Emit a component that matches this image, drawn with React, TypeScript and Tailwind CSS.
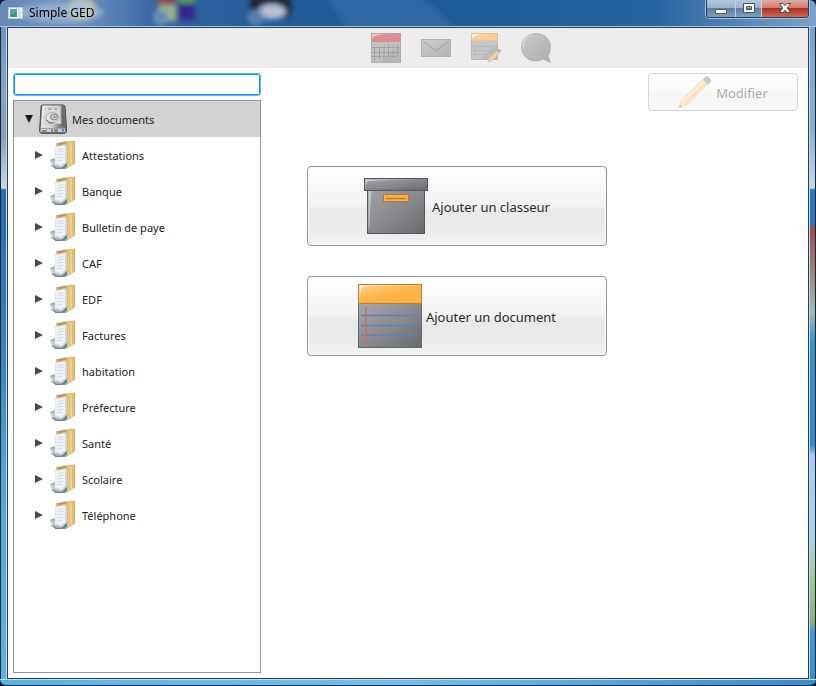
import { useId, useState, type ReactNode } from "react";

const folders = [
  "Attestations",
  "Banque",
  "Bulletin de paye",
  "CAF",
  "EDF",
  "Factures",
  "habitation",
  "Préfecture",
  "Santé",
  "Scolaire",
  "Téléphone",
];

function AppIcon() {
  return (
    <svg width="16" height="14" viewBox="0 0 16 14" aria-hidden="true">
      <rect x="0.5" y="1.5" width="14" height="11" fill="#f4f7f8" stroke="#c3ccd2" />
      <rect x="2" y="3" width="7" height="8" fill="#3f9180" />
      <path d="M2 3h7v3L2 9z" fill="#5a9fb0" />
      <rect x="10" y="3" width="3" height="8" fill="#d5dde0" />
    </svg>
  );
}

function DiskIcon() {
  const id = useId();
  return (
    <svg width="28" height="30" viewBox="0 0 28 30" aria-hidden="true">
      <defs>
        <linearGradient id={id} x1="0" y1="0" x2="1" y2="0.3">
          <stop offset="0" stopColor="#f2f2f2" />
          <stop offset="0.7" stopColor="#cfcfcf" />
          <stop offset="1" stopColor="#7d7d7d" />
        </linearGradient>
      </defs>
      <path d="M3.5 1h21l1.500 1.200 1.500 22v3.500L26 29.300H2L0.700 27.800V24L2.100 2z" fill="#777" stroke="#4b4b4b" />
      <path d="M4 1.600h19.500l1.600 22.400H1.800L3.200 2.400z" fill={`url(#${id})`} />
      <path d="M22.500 2h2.200l1.500 21h-3z" fill="#6a6a6a" />
      <path d="M6 3.500h15l1 16H5z" fill="#dcdcdc" stroke="#c0c0c0" strokeWidth="0.6" />
      <path d="M9 4.500h4v1H9zM15 4.500h3v1h-3z" fill="#888" />
      <ellipse cx="13.500" cy="13.500" rx="6.500" ry="5" fill="#e4e4e4" stroke="#adadad" />
      <ellipse cx="15" cy="13" rx="3.500" ry="3" fill="#cdcdcd" stroke="#7d7d7d" />
      <circle cx="15.500" cy="13" r="1" fill="#777" />
      <path d="M7.500 16q2 4 7 2.500" stroke="#666" fill="none" />
      <path d="M1.500 24.500h24.500v3.500H1.500z" fill="#d0d0d0" />
      <path d="M3 27h5M13 25v3M16 25v3M18 25v3" stroke="#444" />
      <circle cx="24" cy="26" r="1.500" fill="#3693c9" />
    </svg>
  );
}

function FolderIcon() {
  const id = useId();
  return (
    <svg width="28" height="30" viewBox="0 0 28 30" aria-hidden="true">
      <defs>
        <linearGradient id={id}>
          <stop offset="0" stopColor="#d6b268" />
          <stop offset="0.35" stopColor="#f3d893" />
          <stop offset="1" stopColor="#d3ad61" />
        </linearGradient>
      </defs>
      <path d="M6 3.500L14 1.500l8-.7 3-.3V5L17 28 8 24 6 20z" fill="#e0c07c" />
      <path d="M6.500 3.500l9-1.500 2 1-9 2.500z" fill="#b29659" />
      <path d="M0 20l5-2 12 4v6.500l-12 .8z" fill="#9ea8ac" />
      <path d="M0 19.500L5 21l-1.500 6z" fill="#b7c1c6" />
      <path d="M1.500 25.500l5 3 9-.3" stroke="#6e7c83" fill="none" />
      <path d="M2 22l3 3.500 7 1" stroke="#d3dadd" fill="none" />
      <path d="M5 6.500l10.500-1.800L17 6v17l-5 3.500-7.500-2z" fill="#d5dae3" />
      <path d="M5.500 7l9.500-1.300V22l-4 3-6-1.500z" fill="#eff2f8" />
      <path d="M7.500 9.500l6-.8M7.500 12l6-.8M7 15l6.500-.8M6.500 18l7-.8M6.500 21l6-.6" stroke="#c9cfda" strokeWidth="0.8" />
      <path d="M12 28q3-2 4.500-5.500V27z" fill="#2f87a5" />
      <path d="M16.800 4.500L25 1v22.500L17 28.800z" fill={`url(#${id})`} />
      <path d="M20 3.500v22.500" stroke="#c69f58" strokeWidth="0.7" />
      <path d="M21 3.200v22" stroke="#f9e6b4" strokeWidth="0.8" />
    </svg>
  );
}

function CalendarIcon() {
  return (
    <svg width="32" height="32" viewBox="0 0 32 32" aria-hidden="true">
      <rect x="1" y="9" width="30" height="21.500" fill="#c2c3c4" />
      <path d="M31 12v18.500H10z" fill="#b6b7b8" />
      <rect x="1" y="1" width="30" height="9" fill="#db8d91" />
      <path d="M2 7V2h18Q4 2 2 7z" fill="#f1c9cb" />
      <path d="M4.500 16v13M9.500 16v12M14 13v15M18.500 12v12M23 12v12M27.500 12v12M2 15.500h27M2 20.500h27M2 24.500h25" stroke="#939496" strokeWidth="1" opacity="0.7" />
      <rect x="1.500" y="1.500" width="29" height="29" fill="none" stroke="#b0a8a9" strokeWidth="0.8" />
    </svg>
  );
}

function MailIcon() {
  const id = useId();
  return (
    <svg width="32" height="32" viewBox="0 0 32 32" aria-hidden="true">
      <linearGradient id={id} x1="0" y1="0" x2="1" y2="1">
        <stop offset="0" stopColor="#cdcecf" />
        <stop offset="1" stopColor="#b1b2b3" />
      </linearGradient>
      <rect x="1.500" y="7.500" width="29" height="17" fill={`url(#${id})`} stroke="#b4b5b6" />
      <path d="M3 9l13 10L29 9" fill="none" stroke="#9fa0a1" />
    </svg>
  );
}

function NoteEditIcon() {
  return (
    <svg width="32" height="32" viewBox="0 0 32 32" aria-hidden="true">
      <rect x="1.500" y="9" width="26" height="18.500" fill="#c6c7c8" />
      <path d="M27.500 12v15.500H9z" fill="#babbbc" />
      <rect x="1.500" y="1.500" width="26" height="7.500" fill="#f6cf96" stroke="#d9bb8c" strokeWidth="0.8" />
      <path d="M2 7V2h16Q4 2 2 7z" fill="#fff" opacity="0.7" />
      <path d="M4.500 10v15" stroke="#e0b3ab" />
      <path d="M3 14.500h23M3 18.500h23M3 22.500h20" stroke="#adb9d1" />
      <path d="M1.500 9v18.500h26V9" fill="none" stroke="#b0b0b0" strokeWidth="0.8" />
      <path d="M18 30l1-3.500 8-8 2.500 2.500-8 8z" fill="#f7d09b" stroke="#deb98b" strokeWidth="0.7" />
      <path d="M27 18.500l1.500-1.500q2-.5 2.500 2l-1.500 1.500z" fill="#b0b1b3" />
    </svg>
  );
}

function BubbleIcon() {
  const id = useId();
  return (
    <svg width="32" height="32" viewBox="0 0 32 32" aria-hidden="true">
      <linearGradient id={id} x1="0" y1="0" x2="1" y2="1">
        <stop offset="0" stopColor="#c9cacb" />
        <stop offset="1" stopColor="#adaeaf" />
      </linearGradient>
      <path d="M16 1.500c8 0 14.500 5.600 14.500 13.500 0 4-1 6.500-2.500 8.800L30.500 30.500l-7.500-3.500c-2 1.200-4.300 2-7 2C7.800 29 1.500 23.200 1.500 15.200S7.800 1.500 16 1.500z" fill={`url(#${id})`} stroke="#aeafb0" strokeWidth="0.8" />
      <path d="M3 15Q3 5 13 3" fill="none" stroke="#e6e6e6" />
    </svg>
  );
}

function PencilIcon() {
  return (
    <svg width="34" height="34" viewBox="0 0 34 34" aria-hidden="true">
      <path d="M1 33l2-8L25 4l5 5L9 30z" fill="#fbb968" stroke="#f2a649" strokeWidth="0.6" />
      <path d="M5 26L26 6" stroke="#ffd49a" strokeWidth="2" />
      <path d="M1 33l2-8 6 5z" fill="#f4c78b" />
      <path d="M1 33l1-3 2 1z" fill="#555" />
      <path d="M25 4l2-2q3-2 5 1t0 5l-2 2z" fill="#75787d" />
    </svg>
  );
}

function BinderIcon() {
  const id = useId();
  return (
    <svg width="64" height="64" viewBox="0 0 64 64" aria-hidden="true">
      <defs>
        <linearGradient id={id} x1="0" y1="0" x2="1" y2="1">
          <stop offset="0" stopColor="#a0a2a5" />
          <stop offset="0.5" stopColor="#898a8d" />
          <stop offset="1" stopColor="#68696c" />
        </linearGradient>
      </defs>
      <rect x="3.500" y="16.500" width="57" height="43" fill={`url(#${id})`} stroke="#55565a" />
      <path d="M4.500 17h3q-2 18-2 36l-1 4z" fill="#d2d3d5" opacity="0.75" />
      <rect x="0.500" y="4.500" width="63" height="12" fill={`url(#${id})`} stroke="#55565a" />
      <path d="M1.500 15.500v-10h51Q14 6 4 7 2 8 1.500 15.500z" fill="#e2e3e5" opacity="0.8" />
      <rect x="19.500" y="20.500" width="25" height="7" fill="#fbb04a" stroke="#b77a24" />
      <path d="M22 24.500h20" stroke="#a58254" strokeWidth="1.500" />
    </svg>
  );
}

function DocumentIcon() {
  const id = useId();
  return (
    <svg width="64" height="64" viewBox="0 0 64 64" aria-hidden="true">
      <defs>
        <linearGradient id={id} x1="0" y1="0" x2="1" y2="1">
          <stop offset="0" stopColor="#a7a9ac" />
          <stop offset="0.5" stopColor="#8b8c90" />
          <stop offset="1" stopColor="#68696c" />
        </linearGradient>
        <linearGradient id={`${id}o`} x1="0" y1="0" x2="0.7" y2="1">
          <stop offset="0" stopColor="#fed191" />
          <stop offset="0.6" stopColor="#fdb347" />
          <stop offset="1" stopColor="#fbb040" />
        </linearGradient>
      </defs>
      <rect x="0.500" y="18.500" width="63" height="45" fill={`url(#${id})`} stroke="#66676a" />
      <rect x="0.500" y="0.500" width="63" height="19" fill={`url(#${id}o)`} stroke="#be822b" />
      <path d="M1.500 14V1.500h55Q12 1.800 5 3 2.500 4 1.500 14z" fill="#fff4e3" />
      <path d="M3 31.500h57M3 41.500h57M3 51h57" stroke="#657fae" strokeWidth="1.500" />
      <path d="M8 23v36" stroke="#c56f5c" strokeWidth="1.500" />
    </svg>
  );
}

function Glass() {
  return (
    <svg className="absolute inset-0 h-full w-full" viewBox="0 0 816 27" preserveAspectRatio="none" aria-hidden="true">
      <defs>
        <linearGradient id="glassBase">
          <stop offset="0" stopColor="#6688b6" />
          <stop offset="0.09" stopColor="#7395c2" />
          <stop offset="0.2" stopColor="#3262a0" />
          <stop offset="0.38" stopColor="#215b98" />
          <stop offset="0.6" stopColor="#205d98" />
          <stop offset="0.8" stopColor="#2563a0" />
          <stop offset="0.88" stopColor="#4a7cb0" />
          <stop offset="1" stopColor="#7ca3ca" />
        </linearGradient>
        <filter id="soft" x="-50%" y="-80%" width="200%" height="260%">
          <feGaussianBlur stdDeviation="2.500" />
        </filter>
      </defs>
      <rect width="816" height="27" fill="url(#glassBase)" />
      <g filter="url(#soft)">
        <path d="M325 -6h95l40 40H350z" fill="#2e68a4" />
        <ellipse cx="60" cy="13" rx="44" ry="10" fill="#9bb3d2" opacity="0.8" />
        <ellipse cx="82" cy="9" rx="14" ry="12" fill="#c7cfb2" opacity="0.8" />
        <ellipse cx="78" cy="8" rx="7" ry="6" fill="#aabfdd" />
        <rect x="157" y="-5" width="19" height="9" fill="#94404c" />
        <rect x="178" y="-6" width="17" height="9" fill="#5da34b" />
        <rect x="158" y="5" width="18" height="17" fill="#9bb481" />
        <rect x="178" y="4" width="17" height="17" fill="#38258a" />
        <circle cx="161" cy="18" r="8" fill="#7798c0" />
        <circle cx="161" cy="17" r="3" fill="#4d76ab" />
        <rect x="250" y="-6" width="41" height="24" rx="6" fill="#1c2638" />
        <ellipse cx="272" cy="12" rx="14" ry="8" fill="#b7bfd4" />
        <circle cx="256" cy="18" r="8" fill="#6289b8" />
        <circle cx="256" cy="18" r="3" fill="#4672a8" />
      </g>
    </svg>
  );
}

function ActionButton({ icon, children }: { icon: ReactNode; children: ReactNode }) {
  return (
    <button
      type="button"
      className="flex h-20 w-full max-w-[300px] items-center justify-center gap-1 rounded border border-[#949494] bg-[linear-gradient(to_bottom,#fff_0,#f2f2f2_50%,#e9e9e9_56%,#ebebeb_80%,#f2f2f2_100%)] text-[13px] leading-5 text-[#292929] shadow-[inset_0_0_0_1px_#fafafa]"
    >
      {icon}
      <span className="pt-0.5">{children}</span>
    </button>
  );
}

export default function App() {
  const [open, setOpen] = useState(true);
  const [query, setQuery] = useState("");

  return (
    <div className="bg-[#0b1c30] font-['Noto_Sans',sans-serif]">
      <div className="flex min-h-screen flex-col overflow-hidden rounded-md bg-[#10283c]">
        <header className="relative flex h-[27px] items-start justify-between overflow-hidden rounded-t-md border-b border-[#a9c5df] pr-[7px] pl-2">
          <Glass />
          <div className="relative flex h-[26px] items-center gap-[5px]">
            <AppIcon />
            <h1 className="text-[12px] leading-4 text-black">Simple GED</h1>
          </div>
          <div className="relative flex h-[18px] overflow-hidden rounded-b border border-t-0 border-[#253e60] shadow-[0_0_0_1px_#a4c0dc]">
            <button type="button" aria-label="Réduire" className="flex w-7 items-center justify-center bg-[linear-gradient(to_bottom,#b4c8dc_0,#9bb3cd_45%,#5e7ea3_50%,#829fbd_100%)] pt-1">
              <svg width="14" height="14" viewBox="0 0 14 14" aria-hidden="true">
                <rect x="1.500" y="5.500" width="11" height="4" rx="0.500" fill="#fff" stroke="#4a5268" />
              </svg>
            </button>
            <button type="button" aria-label="Agrandir" className="flex w-[27px] items-center justify-center border-x border-[#c0d3e5] bg-[linear-gradient(to_bottom,#b4c8dc_0,#9bb3cd_45%,#5e7ea3_50%,#829fbd_100%)]">
              <svg width="14" height="14" viewBox="0 0 14 14" aria-hidden="true">
                <path d="M1.500 1.500h11v9h-11zM4.500 4.500v3h5v-3z" fill="#fff" fillRule="evenodd" stroke="#4a5268" />
              </svg>
            </button>
            <button type="button" aria-label="Fermer" className="flex w-[46px] items-center justify-center bg-[linear-gradient(to_bottom,#e0aaa0_0,#cf7f72_45%,#b0301f_50%,#cf6a55_100%)]">
              <svg width="14" height="14" viewBox="0 0 14 14" aria-hidden="true">
                <path d="M1.500 1.500h3.500l2 2.200 2-2.200h3.500L9.300 6l3.200 4.500H9L7 8.200l-2 2.300H1.500L4.700 6z" fill="#fff" stroke="#4a4c5e" />
              </svg>
            </button>
          </div>
        </header>

        <div className="flex flex-1">
          <div className="w-[7px] shrink-0 border-r border-l border-r-[#c5dcec] border-l-[#10283c] bg-[linear-gradient(to_bottom,#7192bd_0,#8ca3c0_60px,#8d9eb9_110px,#c8d6e8_161px,#2b69aa_163px,#3784bb_330px,#4ca9d4_450px,#58b5df_100%)]" />

          <div className="flex min-w-0 flex-1 flex-col border border-[#1c405e] bg-white">
            <nav aria-label="Outils" className="flex h-10 items-center justify-center gap-[18px] bg-[#ededed] pl-[105px]">
              <button type="button" aria-label="Calendrier"><CalendarIcon /></button>
              <button type="button" aria-label="Messages"><MailIcon /></button>
              <button type="button" aria-label="Notes"><NoteEditIcon /></button>
              <button type="button" aria-label="Discussion"><BubbleIcon /></button>
            </nav>

            <div className="flex flex-1 p-[5px]">
              <aside className="mr-[5px] flex w-[248px] shrink-0 flex-col gap-1">
                <input
                  type="text"
                  aria-label="Rechercher"
                  value={query}
                  onChange={(e) => setQuery(e.target.value)}
                  className="h-[23px] w-full rounded-[3px] border border-[#5cb8ff] bg-white px-2 text-[11px] text-[#222] shadow-[inset_0_0_0_1px_#0093ff] outline-none"
                />
                <div className="flex-1 border border-[#939393] bg-white text-[11px] leading-5 text-[#222]">
                  <button
                    type="button"
                    aria-expanded={open}
                    onClick={() => setOpen(!open)}
                    className="flex h-9 w-full items-center bg-[#d2d2d2] pl-[11px]"
                  >
                    <svg width="9" height="8" viewBox="0 0 9 8" aria-hidden="true">
                      <path d="M0 0h8l-4 8z" fill="#1d1d1d" />
                    </svg>
                    <span className="mr-[5px] ml-[5px]"><DiskIcon /></span>
                    <span className="pt-0.5">Mes documents</span>
                  </button>
                  {open && (
                    <ul>
                      {folders.map((name) => (
                        <li key={name}>
                          <button type="button" className="flex h-9 w-full items-center pl-[21px]">
                            <svg width="8" height="9" viewBox="0 0 8 9" aria-hidden="true">
                              <path d="M0 0v8l8-4z" fill="#4a4a4a" />
                            </svg>
                            <span className="mr-1 ml-[7px]"><FolderIcon /></span>
                            <span className="pt-0.5">{name}</span>
                          </button>
                        </li>
                      ))}
                    </ul>
                  )}
                </div>
              </aside>

              <main className="flex min-w-0 flex-1 flex-col items-center gap-[30px] pt-[93px]">
                <ActionButton icon={<BinderIcon />}>Ajouter un classeur</ActionButton>
                <ActionButton icon={<DocumentIcon />}>Ajouter un document</ActionButton>
              </main>

              <div className="w-[155px] shrink-0 pr-[5px]">
                <button
                  type="button"
                  disabled
                  className="flex h-[38px] w-full items-center justify-center gap-1 rounded border border-[#949494] bg-[linear-gradient(to_bottom,#fff_0,#f2f2f2_50%,#e9e9e9_56%,#ebebeb_80%,#f2f2f2_100%)] text-[13px] leading-5 text-[#292929] opacity-40"
                >
                  <PencilIcon />
                  <span className="pt-0.5">Modifier</span>
                </button>
              </div>
            </div>
          </div>

          <div className="w-[7px] shrink-0 border-r border-l border-r-[#10283c] border-l-[#c5dcec] bg-[linear-gradient(to_bottom,#7ea3c9_0,#8cabcb_100px,#c8d9ea_161px,#2e75b5_163px,#2e75b5_196px,#a04d4d_202px,#9c8d80_250px,#a7b9b5_285px,#3d90c2_315px,#3689c0_418px,#abc9ef_428px,#b3d0e8_510px,#a5c993_550px,#8cad7c_595px,#4797cc_605px,#3b8dc6_100%)]" />
        </div>

        <footer className="h-[7px] shrink-0 rounded-b-md border-t border-b border-t-[#c5dcec] border-b-[#10283c] bg-linear-to-r from-[#58b5df] via-[#74bfe8] to-[#3b8dc6]" />
      </div>
    </div>
  );
}
